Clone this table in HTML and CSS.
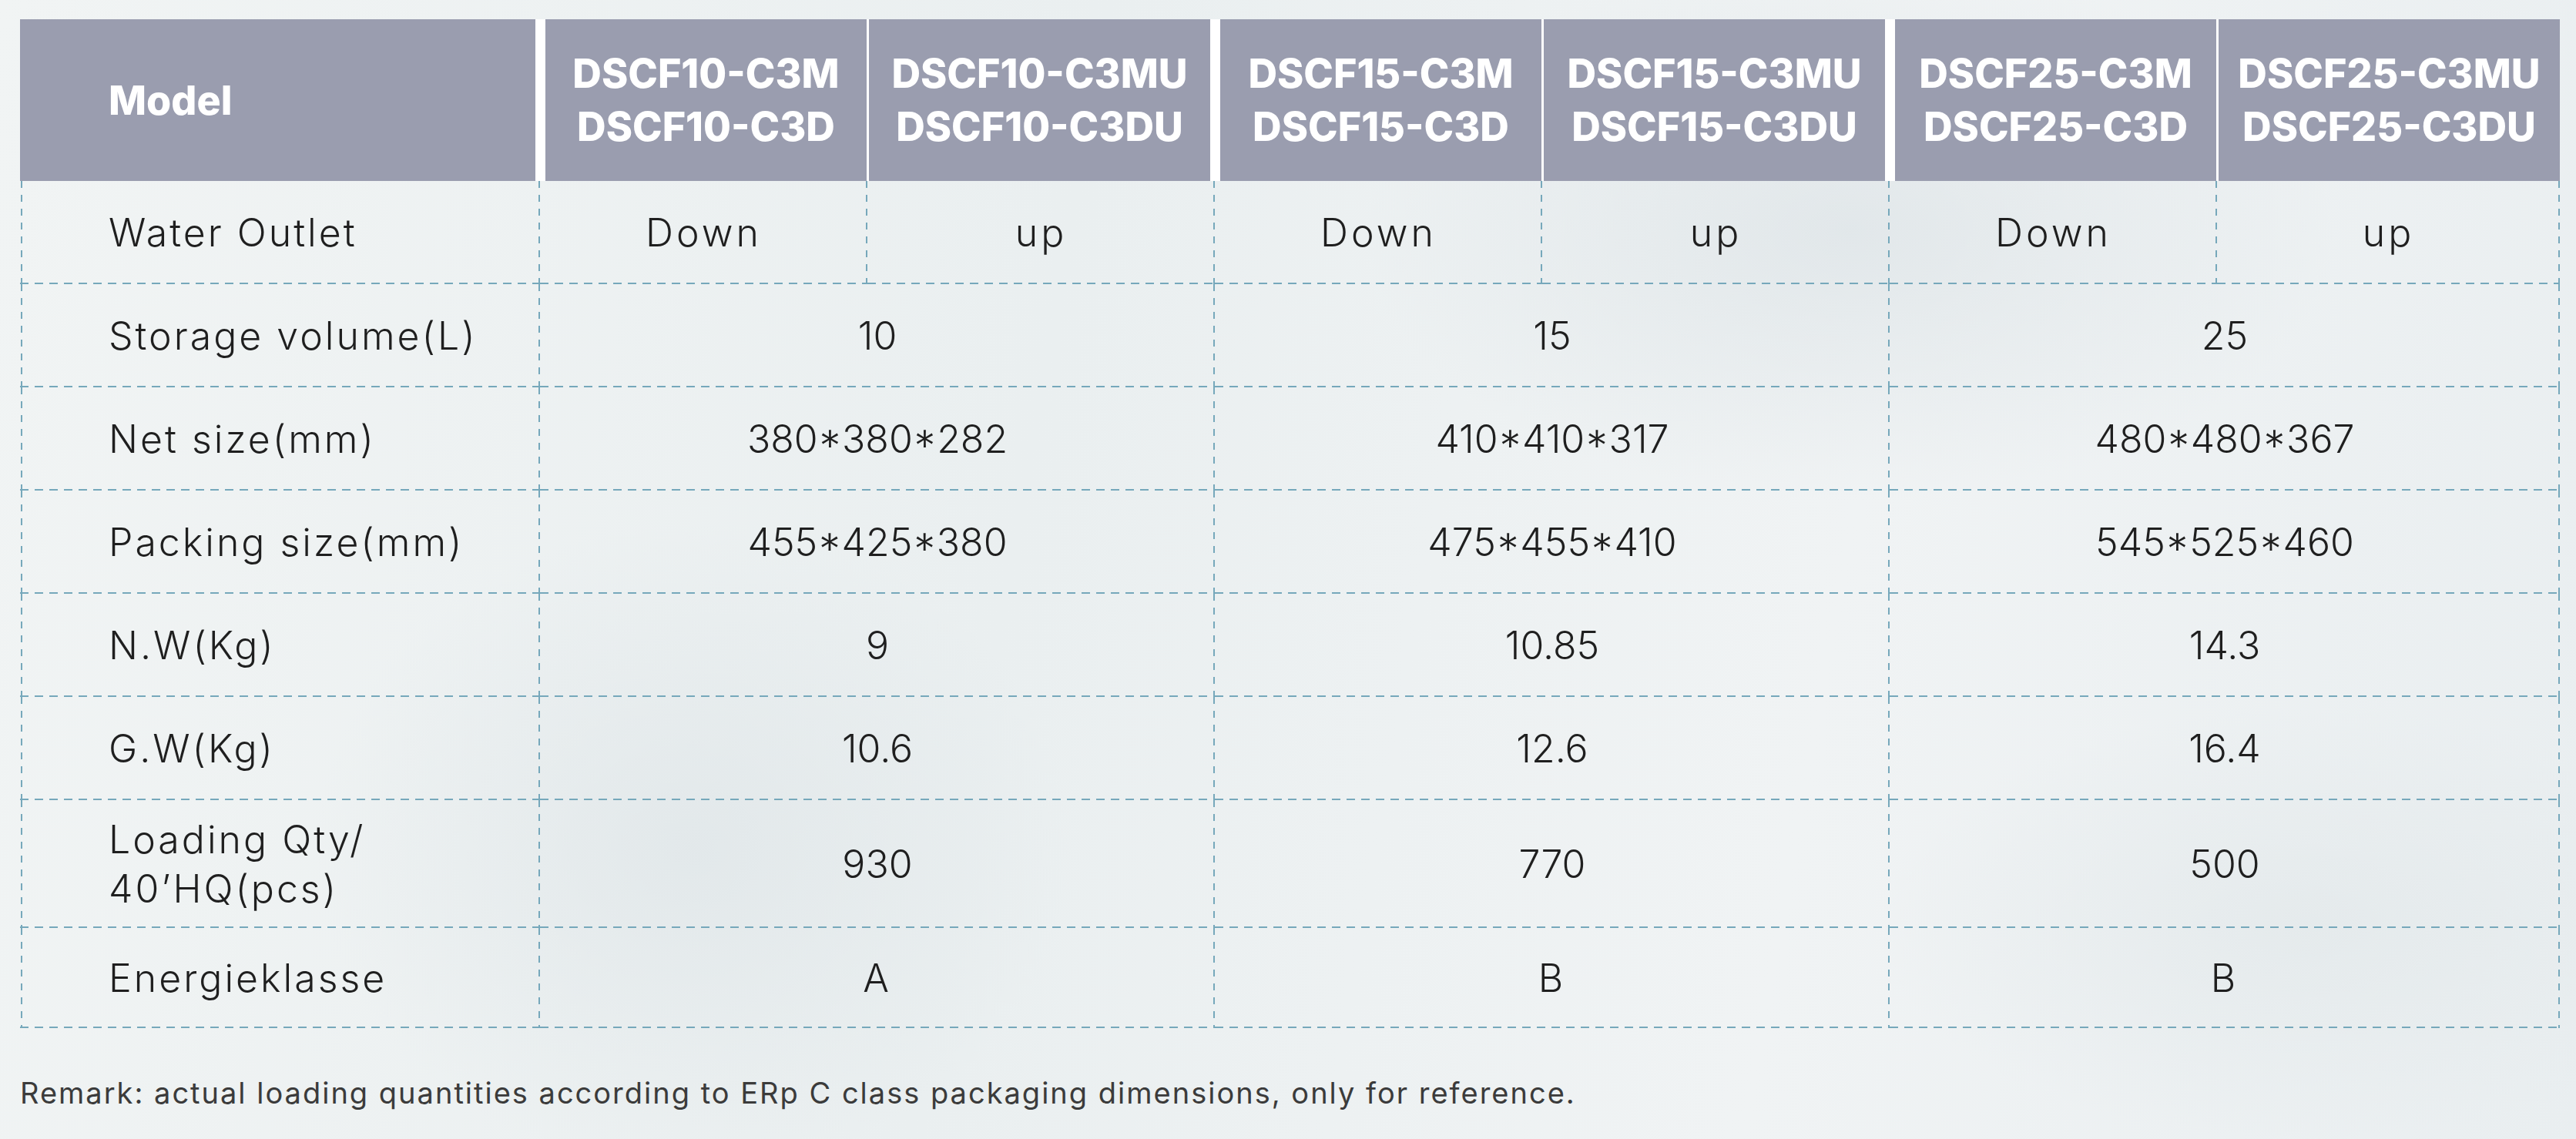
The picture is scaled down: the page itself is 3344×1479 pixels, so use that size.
FILE: index.html
```html
<!DOCTYPE html>
<html lang="en">
<head>
<meta charset="utf-8">
<title>Specifications</title>
<link rel="stylesheet" href="styles.css">
</head>
<body>
<main class="page">
  <table class="spec">
    <colgroup>
      <col class="c-label">
      <col class="c-a"><col class="c-b">
      <col class="c-a"><col class="c-b">
      <col class="c-a"><col class="c-c">
    </colgroup>
    <thead>
      <tr class="head">
        <th class="h-label">Model</th>
        <th class="h-gs">DSCF10-C3M<br>DSCF10-C3D</th>
        <th class="h-ge">DSCF10-C3MU<br>DSCF10-C3DU</th>
        <th class="h-gs">DSCF15-C3M<br>DSCF15-C3D</th>
        <th class="h-ge">DSCF15-C3MU<br>DSCF15-C3DU</th>
        <th class="h-gs">DSCF25-C3M<br>DSCF25-C3D</th>
        <th class="h-last">DSCF25-C3MU<br>DSCF25-C3DU</th>
      </tr>
    </thead>
    <tbody>
      <tr class="row">
        <td class="label">Water Outlet</td>
        <td class="word">Down</td><td class="word">up</td>
        <td class="word">Down</td><td class="word">up</td>
        <td class="word">Down</td><td class="word">up</td>
      </tr>
      <tr class="row">
        <td class="label">Storage volume(L)</td>
        <td colspan="2">10</td><td colspan="2">15</td><td colspan="2">25</td>
      </tr>
      <tr class="row">
        <td class="label">Net size(mm)</td>
        <td colspan="2">380*380*282</td><td colspan="2">410*410*317</td><td colspan="2">480*480*367</td>
      </tr>
      <tr class="row">
        <td class="label">Packing size(mm)</td>
        <td colspan="2">455*425*380</td><td colspan="2">475*455*410</td><td colspan="2">545*525*460</td>
      </tr>
      <tr class="row">
        <td class="label">N.W(Kg)</td>
        <td colspan="2">9</td><td colspan="2">10.85</td><td colspan="2">14.3</td>
      </tr>
      <tr class="row">
        <td class="label">G.W(Kg)</td>
        <td colspan="2">10.6</td><td colspan="2">12.6</td><td colspan="2">16.4</td>
      </tr>
      <tr class="row row-tall">
        <td class="label">Loading Qty/<br>40’HQ(pcs)</td>
        <td colspan="2">930</td><td colspan="2">770</td><td colspan="2">500</td>
      </tr>
      <tr class="row row-last">
        <td class="label">Energieklasse</td>
        <td colspan="2" class="word">A</td><td colspan="2" class="word">B</td><td colspan="2" class="word">B</td>
      </tr>
    </tbody>
  </table>
  <p class="remark">Remark: actual loading quantities according to ERp C class packaging dimensions, only for reference.</p>
</main>
</body>
</html>
```

FILE: styles.css
```css
html, body {
  margin: 0;
  padding: 0;
}

body {
  width: 3344px;
  height: 1479px;
  overflow: hidden;
  font-family: "Inter", "Open Sans", sans-serif;
  color: #1f1f1f;
  background-color: #eef2f3;
  background-image:
    radial-gradient(ellipse 900px 500px at 2400px 300px, rgba(214, 222, 226, 0.55), rgba(214, 222, 226, 0) 70%),
    radial-gradient(ellipse 700px 600px at 900px 1100px, rgba(220, 227, 230, 0.6), rgba(220, 227, 230, 0) 70%),
    radial-gradient(ellipse 800px 400px at 3000px 1200px, rgba(226, 232, 234, 0.7), rgba(226, 232, 234, 0) 70%),
    linear-gradient(100deg, #f1f4f4 0%, #eaeff0 40%, #f0f3f4 70%, #e9eef0 100%);
}

.page {
  padding: 25px 0 0 26px;
}

.spec {
  border-collapse: separate;
  border-spacing: 0;
  table-layout: fixed;
  width: 3297px;
}

.c-label { width: 675px; }
.c-a { width: 425px; }
.c-b { width: 451px; }
.c-c { width: 445px; }

/* header */
.head {
  height: 210px;
}

.head th {
  background: #9a9daf;
  color: #ffffff;
  font-weight: 800;
  font-size: 52px;
  line-height: 69px;
  letter-spacing: 0;
  text-align: center;
  vertical-align: middle;
  padding: 0;
  border-style: solid;
  border-color: #ffffff;
  border-width: 0;
  white-space: nowrap;
}

.head .h-label {
  text-align: left;
  padding-left: 115px;
  border-right-width: 6px;
}

.head .h-gs {
  border-left-width: 7px;
  border-right-width: 1px;
}

.head .h-ge {
  border-left-width: 2px;
  border-right-width: 6px;
}

.head .h-last {
  border-left-width: 2px;
}

/* body */
.row {
  height: 134px;
}

.row-tall {
  height: 166px;
}

.row-last {
  height: 130px;
}

.row td {
  padding: 0;
  font-weight: 300;
  font-size: 50px;
  line-height: 64px;
  text-align: center;
  vertical-align: middle;
  white-space: nowrap;
  background-image:
    linear-gradient(to right, #76a8bb 0 11px, transparent 11px 19px),
    linear-gradient(to bottom, #76a8bb 0 9px, transparent 9px 18px);
  background-size: 19px 2px, 2px 18px;
  background-position: left bottom, right top;
  background-repeat: repeat-x, repeat-y;
}

.row td.word {
  letter-spacing: 4px;
}

.row td.label {
  text-align: left;
  padding-left: 115px;
  letter-spacing: 3px;
  background-image:
    linear-gradient(to right, #76a8bb 0 11px, transparent 11px 19px),
    linear-gradient(to bottom, #76a8bb 0 9px, transparent 9px 18px),
    linear-gradient(to bottom, #76a8bb 0 9px, transparent 9px 18px);
  background-size: 19px 2px, 2px 18px, 2px 18px;
  background-position: left bottom, right top, 1px top;
  background-repeat: repeat-x, repeat-y, repeat-y;
}

.remark {
  margin: 60px 0 0 0;
  font-weight: 400;
  font-size: 38px;
  line-height: 48px;
  letter-spacing: 2px;
  color: #3b3b3b;
}
```
